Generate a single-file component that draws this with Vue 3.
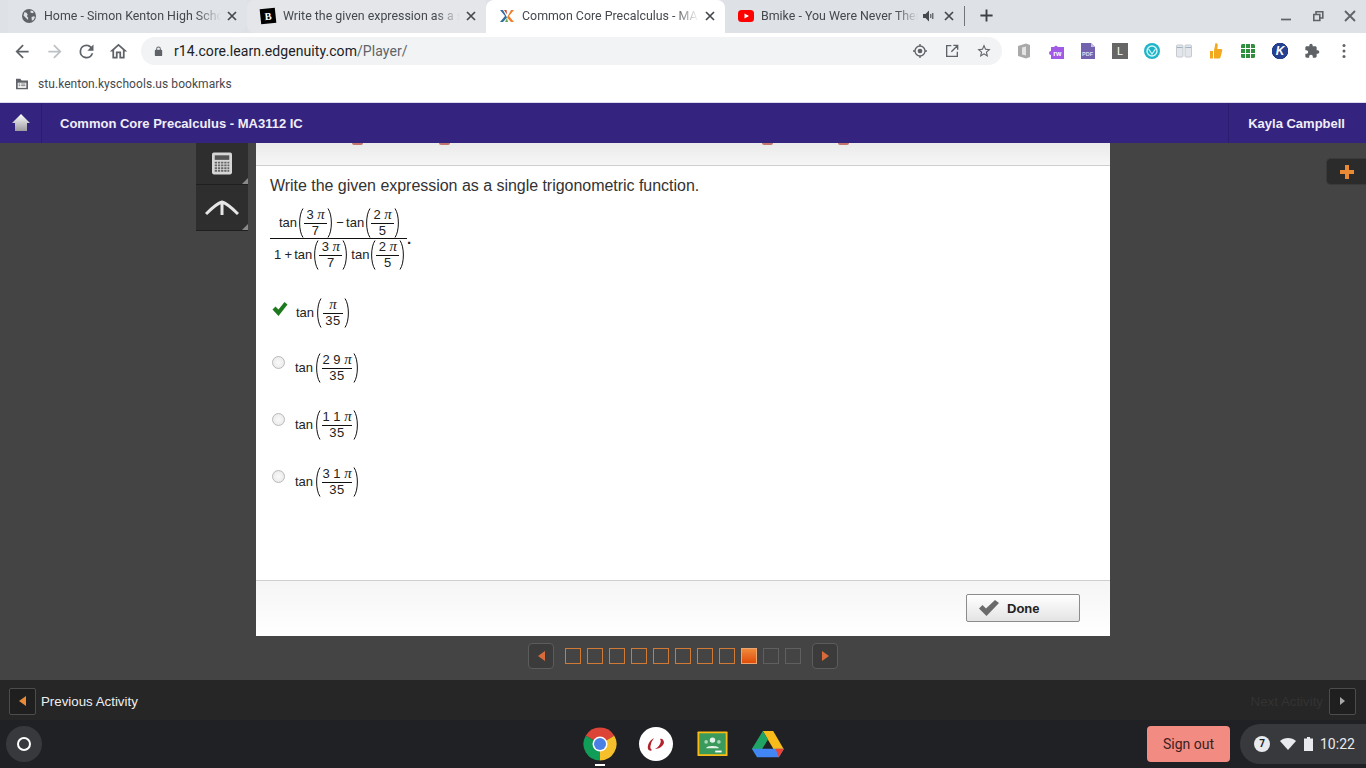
<template>
  <div class="screen">
    <!-- Tabs -->
    <div class="tabstrip">
      <div v-for="tab in tabs" :key="tab.title" class="tab" :class="tab.cls">
        <svg v-if="tab.icon === 'globe'" class="favicon" viewBox="0 0 16 16">
          <circle cx="8" cy="8" r="7" fill="#5f6368" />
          <path d="M3.500 4l2 .8 1.200 1.700-.8 1.700 1.200 1.300v2.500L5 10 2.500 7.500zM9.500 2.500l2.500.5.8 1.500-1.600.8-1.700-.8zM10.500 9l2.500-.8 1 .8-1.600 3.200-1.600.4z" fill="#dee1e6" />
        </svg>
        <span v-else-if="tab.icon === 'brainly'" class="favicon brainly">B</span>
        <svg v-else-if="tab.icon === 'edge'" class="favicon" viewBox="0 0 16 16">
          <path d="M1 2l5 6-5 6h3l4-4.500L4 2z" fill="#2f6f9f" />
          <path d="M15 2l-5 6 5 6h-3L8 9.500 12 2z" fill="#ee7f2d" />
          <path d="M5 2h2.500L8 6.500z" fill="#c8452f" />
          <path d="M6 14h3L8 10z" fill="#6aa84f" />
        </svg>
        <svg v-else class="favicon" viewBox="0 0 16 16">
          <rect y="2" width="16" height="12" rx="3.500" fill="#f00" />
          <path d="M6.500 5.500L11 8l-4.500 2.500z" fill="#fff" />
        </svg>
        <span class="tab-title">{{ tab.title }}</span>
        <svg v-if="tab.audio" class="speaker" viewBox="0 0 16 16">
          <path d="M1 6h2.500L7 2.500v11L3.500 10H1z" fill="#45484d" transform="translate(2 0)" />
          <path d="M10.800 6v4M12.800 5v6" stroke="#45484d" stroke-width="1.100" />
        </svg>
        <svg class="tab-close" viewBox="0 0 16 16">
          <path d="M4 4l8 8M12 4l-8 8" stroke="#45484d" stroke-width="1.700" />
        </svg>
      </div>
      <span class="tab-sep" />
      <svg class="new-tab" viewBox="0 0 16 16">
        <path d="M8 1.500v13M1.500 8h13" stroke="#3c4043" stroke-width="2" />
      </svg>
      <div class="win-controls">
        <svg viewBox="0 0 16 16"><path d="M3 11.500h10" stroke="#5f6368" stroke-width="1.700" /></svg>
        <svg viewBox="0 0 16 16">
          <path d="M6 6V3.800h6.800V10H10.500M3.800 6.500h6v6h-6z" fill="none" stroke="#5f6368" stroke-width="1.600" />
        </svg>
        <svg viewBox="0 0 16 16">
          <path d="M3 3l10 10M13 3L3 13" stroke="#5f6368" stroke-width="1.800" />
        </svg>
      </div>
    </div>

    <!-- Toolbar -->
    <div class="toolbar">
      <span class="tool-btn">
        <svg viewBox="0 0 24 24"><path d="M19 11H7.800l5.600-5.600L12 4l-8 8 8 8 1.400-1.400L7.800 13H19z" fill="#5f6368" /></svg>
      </span>
      <span class="tool-btn">
        <svg viewBox="0 0 24 24"><path d="M5 11h11.200l-5.600-5.600L12 4l8 8-8 8-1.400-1.400 5.600-5.600H5z" fill="#bdc1c6" /></svg>
      </span>
      <span class="tool-btn">
        <svg viewBox="0 0 24 24"><path d="M17.650 6.350A7.950 7.950 0 0 0 12 4a8 8 0 1 0 7.730 10h-2.080A6 6 0 1 1 12 6c1.660 0 3.140.69 4.220 1.780L13 11h7V4z" fill="#5f6368" /></svg>
      </span>
      <span class="tool-btn">
        <svg viewBox="0 0 24 24"><path d="M12 5.690l5 4.500V18h-2v-6H9v6H7v-7.810l5-4.500M12 3L2 12h3v8h6v-6h2v6h6v-8h3z" fill="#5f6368" /></svg>
      </span>
      <div class="omnibox">
        <svg class="lock" viewBox="0 0 24 24">
          <path d="M18 8h-1V6a5 5 0 0 0-10 0v2H6a2 2 0 0 0-2 2v10c0 1.100.9 2 2 2h12a2 2 0 0 0 2-2V10a2 2 0 0 0-2-2zM9 6a3 3 0 0 1 6 0v2H9z" fill="#5f6368" />
        </svg>
        <span class="url">r14.core.learn.edgenuity.com<span class="url-path">/Player/</span></span>
        <span class="omni-btn">
          <svg viewBox="0 0 24 24">
            <circle cx="12" cy="12" r="7.500" fill="none" stroke="#5f6368" stroke-width="2" />
            <circle cx="12" cy="12" r="3.500" fill="#5f6368" />
            <path d="M12 1.500v3M12 19.500v3M1.500 12h3M19.500 12h3" stroke="#5f6368" stroke-width="2" />
          </svg>
        </span>
        <span class="omni-btn">
          <svg viewBox="0 0 24 24">
            <path d="M11 4H4v16h16v-7M20 4l-9 9M14 3.500h6.500V10" fill="none" stroke="#5f6368" stroke-width="2" />
          </svg>
        </span>
        <span class="omni-btn">
          <svg viewBox="0 0 24 24">
            <path d="M22 9.240l-7.190-.62L12 2 9.190 8.630 2 9.240l5.460 4.730L5.820 21 12 17.270 18.180 21l-1.630-7.030L22 9.240zM12 15.400l-3.760 2.270 1-4.280-3.320-2.880 4.380-.38L12 6.100l1.710 4.040 4.380.38-3.320 2.880 1 4.280L12 15.400z" fill="#5f6368" />
          </svg>
        </span>
      </div>
      <div class="extensions">
        <span class="ext">
          <svg viewBox="0 0 16 16">
            <path d="M2 3L10 .5l4 1.500v12l-4 1.500L2 13z" fill="#a9a9a9" />
            <path d="M6 4.500l4-1v9l-4-1z" fill="#e4e4e4" />
          </svg>
        </span>
        <span class="ext">
          <svg viewBox="0 0 16 16">
            <path d="M3 4h3.200a2 2 0 0 1 3.600 0H16v12H3v-4a1.800 1.800 0 0 1 0-4z" fill="#a259e6" />
            <text x="5.200" y="12.500" class="ext-text rw">rw</text>
          </svg>
        </span>
        <span class="ext">
          <svg viewBox="0 0 16 16">
            <path d="M1 0h10l4 4v12H1z" fill="#7362ad" />
            <path d="M11 0l4 4h-4z" fill="#c6bfe0" />
            <text x="2" y="12.500" class="ext-text pdf">PDF</text>
          </svg>
        </span>
        <span class="ext ext-l">L</span>
        <span class="ext">
          <svg viewBox="0 0 16 16">
            <circle cx="8" cy="8" r="8" fill="#1eb4c8" />
            <circle cx="8" cy="8" r="5" fill="none" stroke="#d6f6fa" stroke-width="1.400" />
            <path d="M4.500 6L8 11l3.500-5" fill="none" stroke="#d6f6fa" stroke-width="1.200" />
          </svg>
        </span>
        <span class="ext">
          <svg viewBox="0 0 16 16">
            <rect x="0.500" y="2" width="6.500" height="12" rx="1" fill="#e3e6ea" stroke="#c5cad0" />
            <rect x="9" y="2" width="6.500" height="12" rx="1" fill="#e3e6ea" stroke="#c5cad0" />
            <path d="M1 4.500h5.500M9.500 4.500H15" stroke="#9fb1c4" />
          </svg>
        </span>
        <span class="ext">
          <svg viewBox="0 0 16 16">
            <path d="M2 8h3v7.500H2zM6 7.500L7.500 0c1.500 0 2.500 1 2.200 2.500L9.300 6H13c1 0 1.500.8 1.200 1.700l-1.800 6.800c-.2.600-.6 1-1.200 1H6z" fill="#f2a91e" />
          </svg>
        </span>
        <span class="ext">
          <svg viewBox="0 0 16 16">
            <rect x="1" y="1" width="14" height="14" rx="1.500" fill="#2f8f3e" />
            <path d="M5.500 1v14M10.500 1v14M1 5.500h14M1 10.500h14" stroke="#fff" stroke-width="1" />
          </svg>
        </span>
        <span class="ext ext-k">K</span>
        <span class="ext">
          <svg viewBox="0 0 24 24">
            <path d="M20.500 11H19V7c0-1.100-.9-2-2-2h-4V3.500a2.500 2.500 0 0 0-5 0V5H4c-1.100 0-1.990.9-1.990 2v3.800H3.500c1.490 0 2.700 1.210 2.700 2.700s-1.210 2.700-2.700 2.700H2V20c0 1.100.9 2 2 2h3.800v-1.500c0-1.490 1.210-2.700 2.700-2.700 1.490 0 2.700 1.210 2.700 2.700V22H17c1.100 0 2-.9 2-2v-4h1.500a2.500 2.500 0 0 0 0-5z" fill="#5f6368" />
          </svg>
        </span>
        <span class="ext">
          <svg viewBox="0 0 16 16">
            <circle cx="8" cy="2.500" r="1.500" fill="#5f6368" />
            <circle cx="8" cy="8" r="1.500" fill="#5f6368" />
            <circle cx="8" cy="13.500" r="1.500" fill="#5f6368" />
          </svg>
        </span>
      </div>
    </div>

    <!-- Bookmarks -->
    <div class="bookmarks">
      <svg class="folder" viewBox="0 0 16 14">
        <path d="M1 1h5l1.500 2H15v10H1z" fill="#5f6368" />
        <path d="M3 5.500h10v6H3z" fill="#fff" />
        <path d="M7 7h5M7 9h5M4 7h2M4 9h2" stroke="#5f6368" />
      </svg>
      <span>stu.kenton.kyschools.us bookmarks</span>
    </div>

    <!-- Edgenuity header -->
    <header class="app-header">
      <div class="home-seg">
        <svg viewBox="0 0 20 20">
          <defs>
            <linearGradient id="homeFill" x1="0" y1="0" x2="0" y2="1">
              <stop offset="0" stop-color="#fff" />
              <stop offset="1" stop-color="#9d9aa0" />
            </linearGradient>
          </defs>
          <path d="M10 1L19 10h-3v8H4v-8H1z" fill="url(#homeFill)" />
        </svg>
      </div>
      <div class="course">Common Core Precalculus - MA3112 IC</div>
      <div class="student">Kayla Campbell</div>
    </header>

    <!-- Player -->
    <main class="player">
      <div class="rail">
        <div class="rail-tile">
          <svg class="calc" viewBox="0 0 22 24">
            <rect width="22" height="24" rx="2" fill="#d6d6d6" />
            <rect x="3" y="3" width="16" height="5" fill="#555" />
            <path d="M3 11h16M3 14h16M3 17h16M3 20h16" stroke="#666" stroke-width="2" stroke-dasharray="2.500 1" />
          </svg>
          <i class="corner" />
        </div>
        <div class="rail-tile">
          <svg class="compass" viewBox="0 0 34 18">
            <path d="M1 15C8 8 13 4 17 3c4 1 9 5 16 12M17 3v13" fill="none" stroke="#e6e6e6" stroke-width="3" />
          </svg>
          <i class="corner" />
        </div>
      </div>

      <div class="column">
        <section class="card">
          <div class="card-top">
            <i class="cutoff c1" /><i class="cutoff c2" /><i class="cutoff c3" /><i class="cutoff c4" />
          </div>
          <div class="card-body">
            <p class="question">Write the given expression as a single trigonometric function.</p>

            <div class="expression">
              <div class="big-frac">
                <div class="big-row top">
                  <span>tan</span>
                  <svg class="paren" viewBox="0 0 7 30"><path d="M6 .5C1.500 7 1.500 23 6 29.500" /></svg>
                  <span class="frac"><span class="num">3 <em>π</em></span><span class="den">7</span></span>
                  <svg class="paren" viewBox="0 0 7 30"><path d="M1 .5C5.500 7 5.500 23 1 29.500" /></svg>
                  <span class="op">−</span>
                  <span>tan</span>
                  <svg class="paren" viewBox="0 0 7 30"><path d="M6 .5C1.500 7 1.500 23 6 29.500" /></svg>
                  <span class="frac"><span class="num">2 <em>π</em></span><span class="den">5</span></span>
                  <svg class="paren" viewBox="0 0 7 30"><path d="M1 .5C5.500 7 5.500 23 1 29.500" /></svg>
                </div>
                <div class="big-row bottom">
                  <span>1</span>
                  <span class="op plus">+</span>
                  <span>tan</span>
                  <svg class="paren" viewBox="0 0 7 30"><path d="M6 .5C1.500 7 1.500 23 6 29.500" /></svg>
                  <span class="frac"><span class="num">3 <em>π</em></span><span class="den">7</span></span>
                  <svg class="paren" viewBox="0 0 7 30"><path d="M1 .5C5.500 7 5.500 23 1 29.500" /></svg>
                  <span class="tan-gap">tan</span>
                  <svg class="paren" viewBox="0 0 7 30"><path d="M6 .5C1.500 7 1.500 23 6 29.500" /></svg>
                  <span class="frac"><span class="num">2 <em>π</em></span><span class="den">5</span></span>
                  <svg class="paren" viewBox="0 0 7 30"><path d="M1 .5C5.500 7 5.500 23 1 29.500" /></svg>
                </div>
              </div>
              <span class="dot">.</span>
            </div>

            <div class="options">
              <div v-for="opt in options" :key="opt.num" class="option" :class="{ picked: opt.picked }">
                <svg v-if="opt.picked" class="check" viewBox="0 0 16 14">
                  <path d="M.5 7.500L3.500 4.500 6.500 7.500 12.500 0 15.500 2.500 6.500 14z" fill="#1f7a1f" />
                </svg>
                <span v-else class="radio" />
                <span class="opt-math">
                  <span>tan</span>
                  <svg class="paren opt-paren" viewBox="0 0 7 30"><path d="M6 .5C1.500 7 1.500 23 6 29.500" /></svg>
                  <span class="frac opt-frac">
                    <span class="num">{{ opt.num }}<em>π</em></span>
                    <span class="den">35</span>
                  </span>
                  <svg class="paren opt-paren" viewBox="0 0 7 30"><path d="M1 .5C5.500 7 5.500 23 1 29.500" /></svg>
                </span>
              </div>
            </div>
          </div>
          <div class="card-foot">
            <button class="done" type="button">
              <svg viewBox="0 0 20 16">
                <path d="M0 8.500L3.500 5 7 8.500 16 0 20 3 7.500 16z" fill="#6b6b6b" />
              </svg>
              Done
            </button>
          </div>
        </section>

        <nav class="pager">
          <span class="pg-btn"><i class="tri tri-left" /></span>
          <span class="squares">
            <i v-for="n in 11" :key="n" class="sq" :class="{ current: n === 9, locked: n > 9 }" />
          </span>
          <span class="pg-btn"><i class="tri tri-right" /></span>
        </nav>
      </div>

      <button class="plus-tab" type="button">
        <svg viewBox="0 0 14 14"><path d="M5 0h4v5h5v4H9v5H5V9H0V5h5z" fill="#ea8a35" /></svg>
      </button>
    </main>

    <!-- Activity footer -->
    <div class="activity-bar">
      <span class="act-btn"><i class="tri tri-left small" /></span>
      <span class="act-prev">Previous Activity</span>
      <span class="act-next">Next Activity</span>
      <span class="act-btn next"><i class="tri tri-right small grey" /></span>
    </div>

    <!-- Chrome OS shelf -->
    <footer class="shelf">
      <span class="launcher"><i /></span>
      <div class="apps">
        <span class="app running">
          <svg viewBox="0 0 34 34">
            <path d="M17 17L2.700 8.750A16.500 16.500 0 0 1 31.300 8.750z" fill="#db4437" />
            <path d="M17 17L2.700 8.750A16.500 16.500 0 0 0 17 33.500z" fill="#0f9d58" />
            <path d="M17 17V33.500A16.500 16.500 0 0 0 31.300 8.750z" fill="#f6c02c" />
            <circle cx="17" cy="17" r="7.500" fill="#fff" />
            <circle cx="17" cy="17" r="6" fill="#4a7fe6" />
          </svg>
        </span>
        <span class="app">
          <svg viewBox="0 0 34 34">
            <circle cx="17" cy="17" r="17" fill="#fff" />
            <path d="M15 11c-4 2-7 7-6 11 1 2 3 2 4 1-2-1-2-3-1-6 0-2 2-4 3-6zM21 12c1 1 1 3 0 5-1 2-3 4-5 5 4 0 8-3 9-6 0-3-2-5-4-4z" fill="#b3212b" />
          </svg>
        </span>
        <span class="app">
          <svg class="classroom" viewBox="0 0 34 28">
            <rect x="0.500" y="0.500" width="33" height="27" rx="1" fill="#f9bc15" />
            <rect x="2.500" y="2.500" width="29" height="23" fill="#3a9a5b" />
            <circle cx="17" cy="10" r="3" fill="#e3f2e8" />
            <circle cx="10" cy="12" r="2" fill="#a9d5b8" />
            <circle cx="24" cy="12" r="2" fill="#a9d5b8" />
            <path d="M10 19c0-3.500 14-3.500 14 0z" fill="#e3f2e8" />
            <rect x="20" y="21.500" width="7" height="2" fill="#fff" />
          </svg>
        </span>
        <span class="app">
          <svg class="drive" viewBox="0 0 34 30">
            <path d="M11.500 1h11l11 19-5.500 9z" fill="#f7bc1a" />
            <path d="M11.500 1L0 20l5.500 9L17 10z" fill="#1fa463" />
            <path d="M5.500 29h23l5.500-9H0z" fill="#4285f4" />
            <path d="M28.500 29L34 20h-9z" fill="#ea4335" />
          </svg>
        </span>
      </div>
      <button class="signout" type="button">Sign out</button>
      <div class="status">
        <span class="badge">7</span>
        <svg class="wifi" viewBox="0 0 16 12"><path d="M0 3c4-4 12-4 16 0l-8 9z" fill="#e8eaed" /></svg>
        <svg class="battery" viewBox="0 0 9 14"><path d="M3 0h3v1.500h3V14H0V1.500h3z" fill="#e8eaed" /></svg>
        <span class="clock">10:22</span>
      </div>
    </footer>
  </div>
</template>

<script setup>
// titles are what the tab strip still shows before the fade
const tabs = [
  { title: 'Home - Simon Kenton High Scho', icon: 'globe', cls: 'first' },
  { title: 'Write the given expression as a si', icon: 'brainly', cls: 'second' },
  { title: 'Common Core Precalculus - MA3', icon: 'edge', cls: 'active' },
  { title: 'Bmike - You Were Never Ther', icon: 'yt', audio: true, cls: '' },
];

const options = [
  { num: '', picked: true },
  { num: '2 9 ' },
  { num: '1 1 ' },
  { num: '3 1 ' },
];
</script>

<style>
html, body {
  margin: 0;
  background: #202124;
}
</style>

<style scoped>
.screen {
  width: 1366px;
  height: 768px;
  overflow: hidden;
  display: flex;
  flex-direction: column;
  font-family: "Liberation Sans", Arial, sans-serif;
}

/* tabs */
.tabstrip {
  height: 33px;
  flex: none;
  display: flex;
  align-items: flex-start;
  padding-left: 8px;
  background: #dee1e6;
  position: relative;
}

.tab {
  width: 239px;
  height: 33px;
  box-sizing: border-box;
  display: flex;
  align-items: center;
  padding: 0 7px 1px 13px;
  font-family: Roboto, sans-serif;
  font-size: 12.4px;
  color: #45494e;
  flex: none;
}

.tab.first { background: #e0e3e7; border-radius: 0 0 10px 0; }
.tab.second { background: #e4e6ea; border-radius: 8px 0 0 8px; }

.tab.active {
  height: 37px;
  padding-bottom: 5px;
  background: #fff;
  border-radius: 8px 8px 0 0;
  position: relative;
  z-index: 1;
}

.favicon {
  width: 16px;
  height: 16px;
  flex: none;
}

.brainly {
  background: #000;
  color: #fff;
  font: bold 11px/16px "Liberation Serif", serif;
  text-align: center;
  transform: rotate(-6deg) scale(0.95);
}

.tab-title {
  flex: 1;
  min-width: 0;
  margin: -1px 0 0 7px;
  white-space: nowrap;
  -webkit-mask-image: linear-gradient(to right, #000 86%, transparent 100%);
  mask-image: linear-gradient(to right, #000 86%, transparent 100%);
}

.speaker {
  width: 16px;
  height: 16px;
  margin: 0 5px 0 2px;
  flex: none;
}

.tab-close {
  width: 16px;
  height: 16px;
  margin-left: 3px;
  flex: none;
}

.speaker + .tab-close {
  margin-left: 0;
}

.tab-sep {
  width: 1px;
  height: 20px;
  margin-top: 6px;
  background: #70757a;
  flex: none;
}

.new-tab {
  width: 15px;
  height: 15px;
  margin: 8px 0 0 14px;
  flex: none;
}

.win-controls {
  margin-left: auto;
  display: flex;
  padding: 8px 8px 0 0;
  gap: 16px;
}

.win-controls svg {
  width: 16px;
  height: 16px;
}

/* toolbar */
.toolbar {
  height: 37px;
  flex: none;
  box-sizing: border-box;
  display: flex;
  align-items: center;
  padding: 0 0 1px 6px;
  background: #fff;
}

.tool-btn {
  width: 32px;
  height: 32px;
  display: flex;
  align-items: center;
  justify-content: center;
}

.tool-btn svg {
  width: 21px;
  height: 21px;
}

.omnibox {
  width: 861px;
  height: 28px;
  margin-left: 7px;
  box-sizing: border-box;
  display: flex;
  align-items: center;
  padding: 0 2px 0 12px;
  background: #f1f3f4;
  border-radius: 14px;
  font-family: Roboto, sans-serif;
}

.lock {
  width: 11px;
  height: 11px;
  flex: none;
}

.url {
  flex: 1;
  margin-left: 10px;
  font-size: 14px;
  letter-spacing: 0.07px;
  color: #202124;
}

.url-path {
  color: #5f6368;
}

.omni-btn {
  width: 32px;
  height: 28px;
  display: flex;
  align-items: center;
  justify-content: center;
}

.omni-btn svg {
  width: 16px;
  height: 16px;
}

.extensions {
  display: flex;
  margin-left: 6px;
}

.ext {
  width: 32px;
  height: 32px;
  display: flex;
  align-items: center;
  justify-content: center;
}

.ext svg {
  width: 16px;
  height: 16px;
}

.ext-l {
  background: linear-gradient(#666, #666) center / 16px 16px no-repeat;
  color: #fff;
  font: 11px Roboto, sans-serif;
}

.ext-k {
  background: radial-gradient(circle at center, #24408e 0 8px, transparent 8.500px);
  color: #fff;
  font: italic bold 12px "Liberation Sans", sans-serif;
}

.ext-text {
  fill: #fff;
  font-family: "Liberation Sans", sans-serif;
  font-weight: bold;
}

.rw { font-size: 7px; }
.pdf { font-size: 5.500px; fill: #e3dff2; }

/* bookmarks */
.bookmarks {
  height: 33px;
  flex: none;
  box-sizing: border-box;
  display: flex;
  align-items: center;
  padding: 0 0 4px 15px;
  background: #fff;
  border-bottom: 1px solid #ddd9ee;
  font: 12px Roboto, sans-serif;
  letter-spacing: 0.06px;
  color: #45494e;
}

.folder {
  width: 14px;
  height: 12px;
  margin-right: 9px;
}

/* header */
.app-header {
  height: 40px;
  flex: none;
  display: flex;
  align-items: stretch;
  background: #35247f;
  color: #f0eef8;
  font-size: 13px;
  font-weight: bold;
  position: relative;
  z-index: 2;
}

.home-seg {
  width: 41px;
  display: flex;
  align-items: center;
  justify-content: center;
  border-right: 1px solid #2b1d6c;
}

.home-seg svg {
  width: 20px;
  height: 20px;
}

.course {
  flex: 1;
  padding: 1px 0 0 18px;
  line-height: 40px;
}

.student {
  width: 138px;
  box-sizing: border-box;
  padding: 1px 21px 0 0;
  border-left: 1px solid #2b1d6c;
  line-height: 40px;
  text-align: right;
}

/* player */
.player {
  height: 537px;
  flex: none;
  display: flex;
  align-items: flex-start;
  background: #444;
}

.rail {
  width: 52px;
  margin-left: 196px;
  flex: none;
  background: #2e2e2e;
}

.rail-tile {
  height: 41px;
  position: relative;
  display: flex;
  align-items: center;
  justify-content: center;
  border-bottom: 1px solid #1f1f1f;
}

.rail-tile + .rail-tile {
  height: 45px;
}

.calc {
  width: 20px;
  height: 23px;
}

.compass {
  width: 34px;
  height: 18px;
}

.corner {
  position: absolute;
  right: 0;
  bottom: 0;
  border-style: solid;
  border-width: 0 0 6px 6px;
  border-color: transparent transparent #8a8a8a transparent;
}

.column {
  width: 854px;
  margin-left: 8px;
  flex: none;
}

.card {
  height: 493px;
  display: flex;
  flex-direction: column;
  background: #fff;
}

.card-top {
  height: 22px;
  flex: none;
  position: relative;
  background: linear-gradient(#eaeaea, #f6f6f6);
  border-bottom: 1px solid #cfcfcf;
}

.cutoff {
  position: absolute;
  top: 0;
  width: 11px;
  height: 2px;
  background: #c4746b;
  border-radius: 0 0 6px 6px;
}

.c1 { left: 96px; }
.c2 { left: 183px; }
.c3 { left: 506px; }
.c4 { left: 582px; }

.card-body {
  flex: 1;
  padding: 9px 0 0 14px;
}

.question {
  margin: 0;
  font-size: 16px;
  line-height: 21px;
  letter-spacing: -0.03px;
  color: #333;
}

.expression {
  display: flex;
  align-items: flex-start;
  margin-top: 11px;
  font-size: 13px;
  color: #222;
}

.big-frac {
  width: 137px;
}

.big-row {
  display: flex;
  align-items: center;
  padding-left: 4px;
}

.big-row.top {
  height: 32px;
  padding-left: 9px;
  box-sizing: border-box;
  border-bottom: 1px solid #111;
}

.big-row.bottom {
  height: 31px;
}

.paren {
  width: 7px;
  height: 30px;
  flex: none;
  fill: none;
  stroke: #111;
  stroke-width: 1;
}

.frac {
  display: inline-flex;
  flex-direction: column;
  align-items: stretch;
  width: 23px;
  text-align: center;
  font-size: 13px;
}

.num {
  height: 15px;
  line-height: 14px;
  border-bottom: 1px solid #111;
  white-space: pre;
}

.den {
  height: 14px;
  line-height: 13px;
  letter-spacing: 0.5px;
}

em {
  font-family: "Liberation Serif", serif;
  font-style: italic;
  font-size: 15px;
  line-height: 12px;
}

.op {
  width: 12px;
  text-align: center;
}

.plus {
  width: 12px;
  margin-left: 1px;
}

.tan-gap {
  margin-left: 2px;
}

.dot {
  margin: 23px 0 0 0;
  font-size: 15px;
  font-weight: bold;
  line-height: 17px;
}

.options {
  margin-top: 16px;
}

.option {
  height: 57px;
  display: flex;
  align-items: center;
  font-size: 13px;
  color: #222;
}

.option.picked {
  height: 53px;
}

.opt-math {
  display: flex;
  align-items: center;
}

.opt-paren {
  margin: 0 1px;
}

.opt-frac {
  width: 30px;
}

.picked .opt-frac {
  width: 20px;
}

.radio {
  width: 11px;
  height: 11px;
  margin: -10px 10px 0 2px;
  border: 1px solid #b9b9b9;
  border-radius: 50%;
  background: radial-gradient(#fafafa, #e6e6e6);
  flex: none;
}

.check {
  width: 16px;
  height: 14px;
  margin: -7px 8px 0 2px;
  flex: none;
}

.card-foot {
  height: 56px;
  flex: none;
  box-sizing: border-box;
  display: flex;
  justify-content: flex-end;
  align-items: flex-start;
  padding: 13px 30px 0 0;
  border-top: 1px solid #cfcfcf;
  background: linear-gradient(#f5f5f5, #fff);
}

.done {
  width: 114px;
  height: 28px;
  box-sizing: border-box;
  display: flex;
  align-items: center;
  padding: 0 0 0 12px;
  border: 1px solid #8c8c8c;
  border-radius: 2px;
  background: linear-gradient(#fff, #e4e4e4);
  font: bold 13px "Liberation Sans", sans-serif;
  color: #222;
}

.done svg {
  width: 20px;
  height: 16px;
  margin-right: 8px;
}

/* pager */
.pager {
  display: flex;
  justify-content: center;
  align-items: center;
  gap: 11px;
  margin-top: 7px;
}

.pg-btn {
  width: 26px;
  height: 26px;
  display: flex;
  align-items: center;
  justify-content: center;
  box-sizing: border-box;
  background: #3b3b3b;
  border: 1px solid #5c5c5c;
  border-radius: 4px;
}

.tri {
  width: 0;
  height: 0;
  border-style: solid;
  border-color: transparent;
}

.tri-left {
  border-width: 5px 7px 5px 0;
  border-right-color: #d96b3a;
}

.tri-right {
  border-width: 5px 0 5px 7px;
  border-left-color: #d96b3a;
}

.tri.small.tri-left { border-right-color: #ea8a35; }
.tri.small.tri-right { border-width: 4px 0 4px 5px; }
.tri.grey { border-left-color: #a8a8a8; }

.squares {
  display: flex;
  gap: 6px;
}

.sq {
  width: 16px;
  height: 16px;
  box-sizing: border-box;
  border: 1px solid #d17a35;
}

.sq.current {
  background: linear-gradient(#f08a3c, #e04c08);
  border-color: #eda56f;
}

.sq.locked {
  border-color: #5f5f5f;
}

.plus-tab {
  width: 40px;
  height: 27px;
  margin: 15px 0 0 auto;
  padding: 0 0 0 13px;
  box-sizing: border-box;
  display: flex;
  align-items: center;
  background: #2b2b2b;
  border: 1px solid #3a3a3a;
  border-right: none;
  border-radius: 5px 0 0 5px;
}

.plus-tab svg {
  width: 14px;
  height: 14px;
}

/* activity bar */
.activity-bar {
  height: 40px;
  flex: none;
  box-sizing: border-box;
  display: flex;
  align-items: center;
  padding: 2px 10px 0 9px;
  background: #262626;
  font-size: 13.3px;
}

.act-btn {
  width: 27px;
  height: 27px;
  box-sizing: border-box;
  display: flex;
  align-items: center;
  justify-content: center;
  border: 1px solid #4c4c4c;
  border-radius: 2px;
  background: #1f1f1f;
}

.act-prev {
  margin-left: 5px;
  color: #eee;
}

.act-next {
  margin-left: auto;
  margin-right: 6px;
  color: #333;
}

/* shelf */
.shelf {
  height: 48px;
  flex: 1;
  display: flex;
  align-items: center;
  padding-left: 6px;
  background: #202124;
}

.launcher {
  width: 36px;
  height: 36px;
  display: flex;
  align-items: center;
  justify-content: center;
  background: #38393c;
  border-radius: 50%;
  flex: none;
}

.launcher i {
  width: 10px;
  height: 10px;
  border: 2px solid #fff;
  border-radius: 50%;
}

.apps {
  display: flex;
  margin-left: 541px;
  gap: 22px;
}

.app {
  width: 34px;
  height: 34px;
  display: flex;
  align-items: center;
  justify-content: center;
  position: relative;
}

.app svg {
  width: 34px;
}

.app .classroom {
  width: 31px;
}

.app .drive {
  width: 32px;
}

.app.running::after {
  content: "";
  position: absolute;
  left: 12px;
  bottom: -5px;
  width: 10px;
  height: 2px;
  background: #fff;
}

.signout {
  width: 83px;
  height: 36px;
  margin-left: 362px;
  border: none;
  border-radius: 4px;
  background: #f28b82;
  color: #3c2120;
  font: 14px Roboto, sans-serif;
}

.status {
  width: 126px;
  height: 40px;
  margin-left: 10px;
  box-sizing: border-box;
  display: flex;
  align-items: center;
  padding-left: 14px;
  background: #38393c;
  border-radius: 20px 0 0 20px;
  color: #e8eaed;
  font: 14px Roboto, sans-serif;
}

.badge {
  width: 16px;
  height: 16px;
  border-radius: 50%;
  background: #e8eaed;
  color: #202124;
  font-size: 10px;
  font-weight: bold;
  line-height: 16px;
  text-align: center;
}

.wifi {
  width: 16px;
  height: 12px;
  margin-left: 10px;
}

.battery {
  width: 9px;
  height: 14px;
  margin-left: 8px;
}

.clock {
  margin-left: 7px;
}
</style>
